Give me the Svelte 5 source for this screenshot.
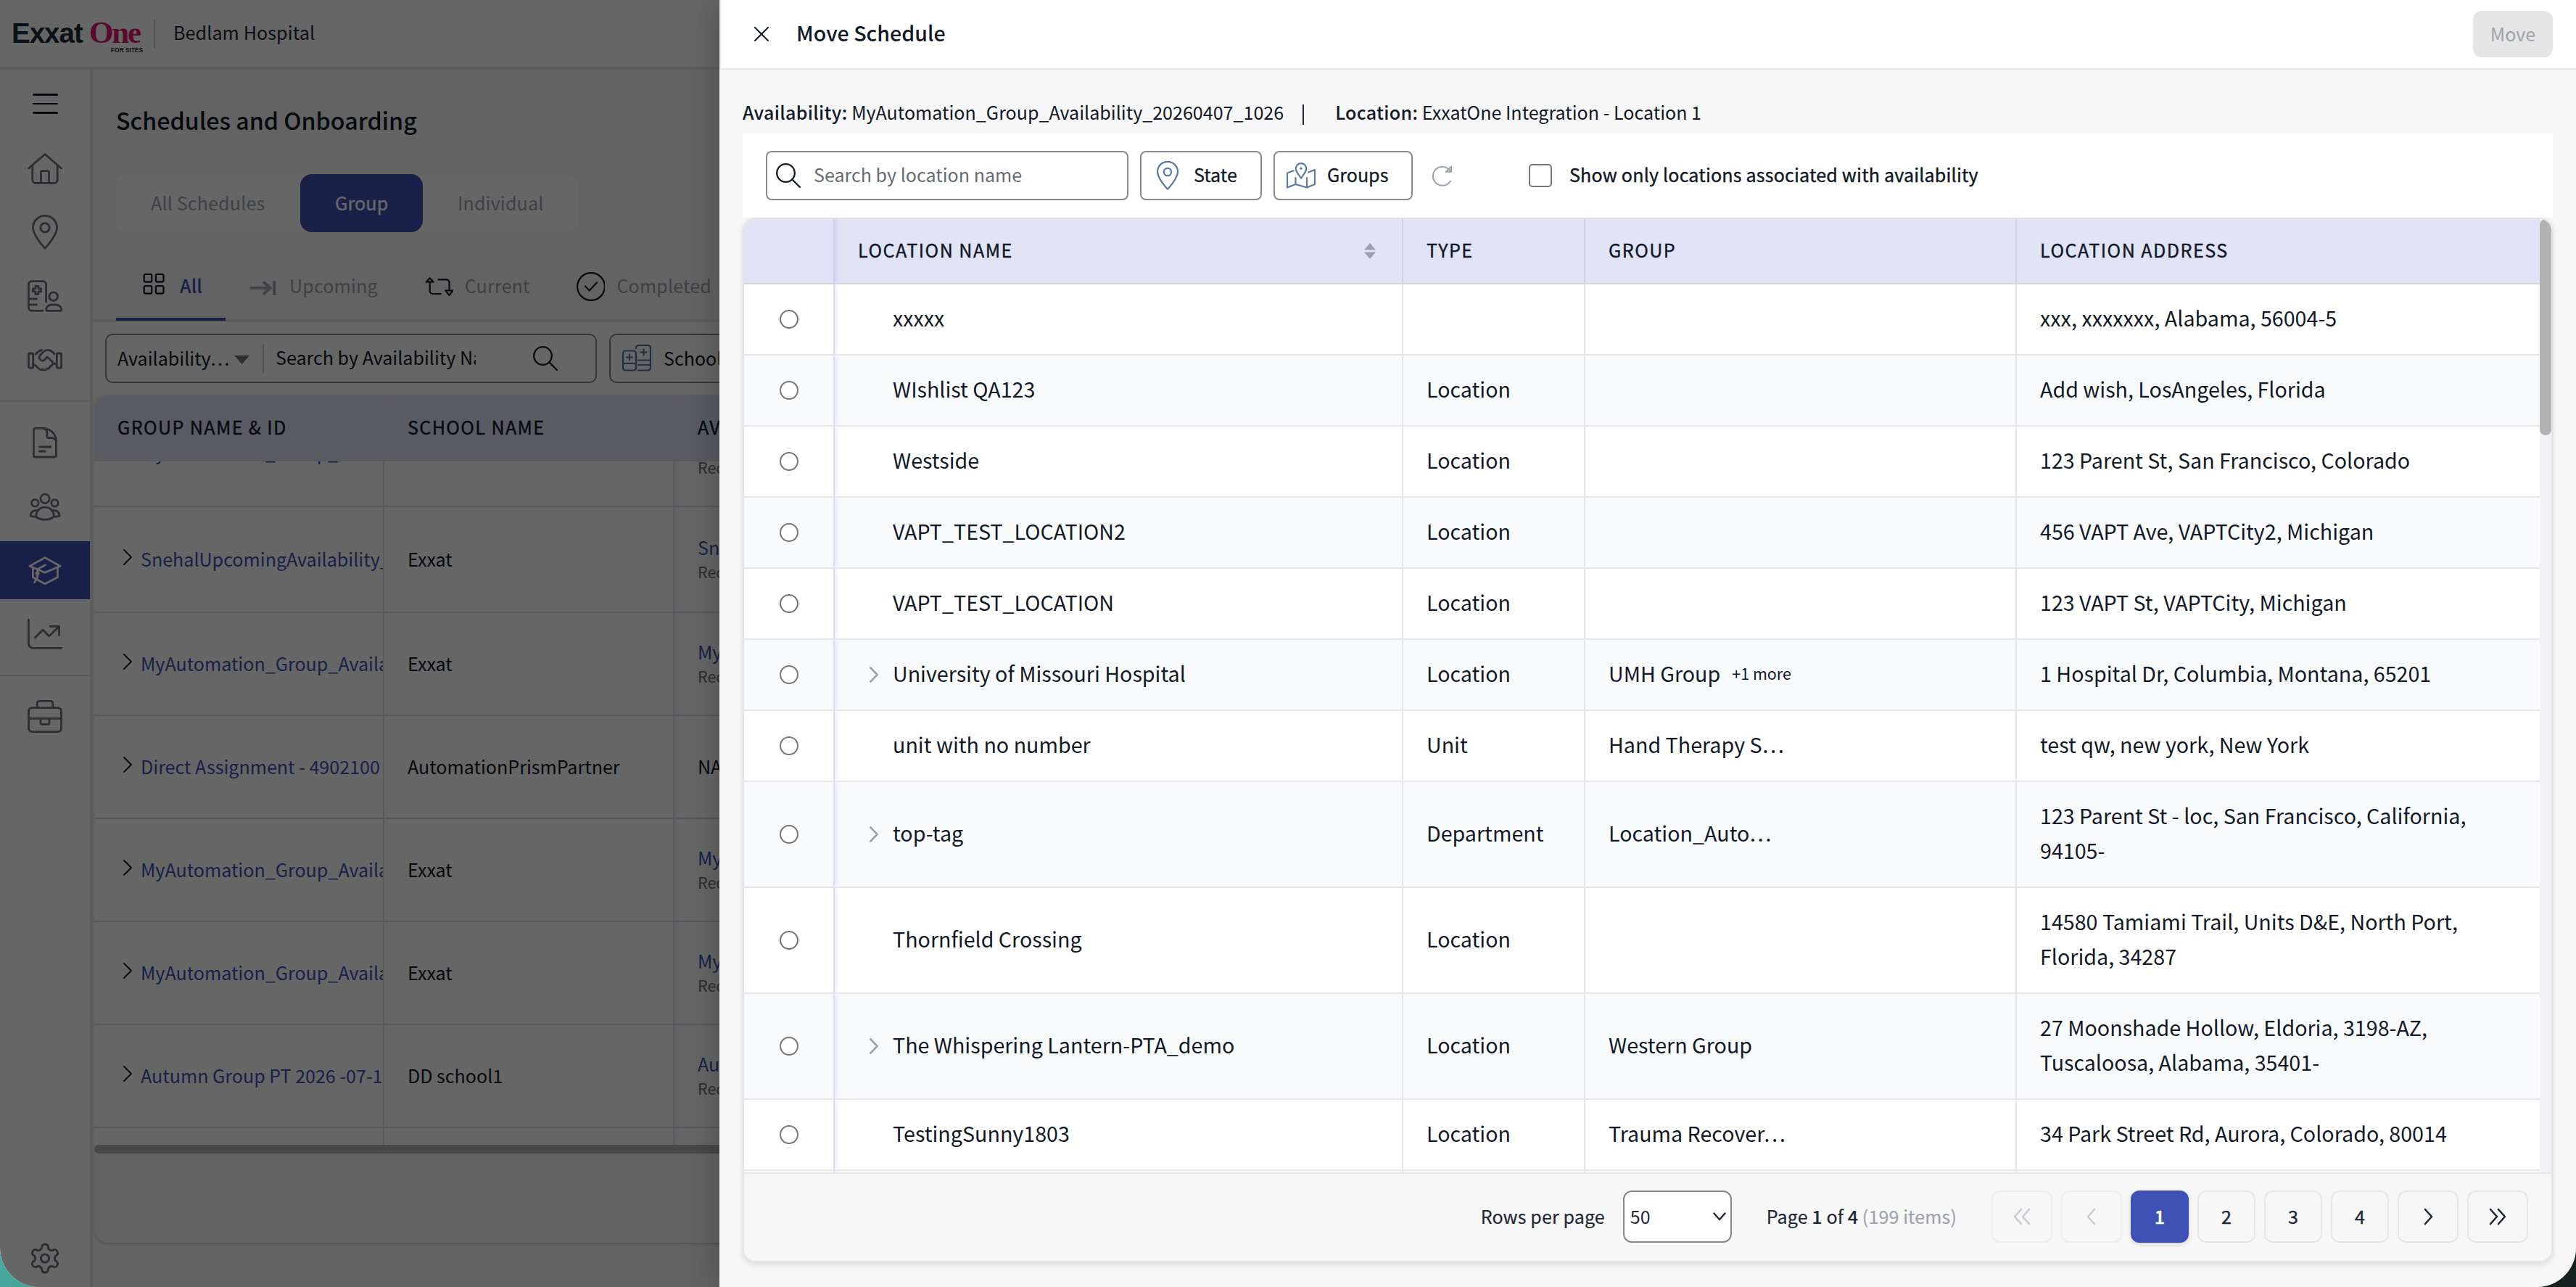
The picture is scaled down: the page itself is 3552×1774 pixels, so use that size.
<script>
  const navGroups = [
    ['home', 'pin', 'facility', 'handshake'],
    ['file', 'people', 'graduation', 'chart'],
    ['briefcase']
  ];
  const activeNav = 'graduation';

  const statusTabs = [
    { label: 'All', icon: 'grid', active: true },
    { label: 'Upcoming', icon: 'upcoming' },
    { label: 'Current', icon: 'current' },
    { label: 'Completed', icon: 'check' }
  ];

  const schedules = [
    { name: 'MyAutomation_Group_Availability', school: 'Exxat', availability: 'MyAutomation', sub: 'Requested' },
    { name: 'SnehalUpcomingAvailability_01', school: 'Exxat', availability: 'SnehalUpcoming', sub: 'Requested', tall: true },
    { name: 'MyAutomation_Group_Availability', school: 'Exxat', availability: 'MyAutomation', sub: 'Requested' },
    { name: 'Direct Assignment - 4902100', school: 'AutomationPrismPartner', availability: 'NA' },
    { name: 'MyAutomation_Group_Availability', school: 'Exxat', availability: 'MyAutomation', sub: 'Requested' },
    { name: 'MyAutomation_Group_Availability', school: 'Exxat', availability: 'MyAutomation', sub: 'Requested' },
    { name: 'Autumn Group PT 2026 -07-14', school: 'DD school1', availability: 'Autumn Group', sub: 'Requested' },
    { name: '', school: '', availability: '' }
  ];

  const locations = [
    { name: 'xxxxx', type: '', group: '', address: 'xxx, xxxxxxx, Alabama, 56004-5' },
    { name: 'WIshlist QA123', type: 'Location', group: '', address: 'Add wish, LosAngeles, Florida' },
    { name: 'Westside', type: 'Location', group: '', address: '123 Parent St, San Francisco, Colorado' },
    { name: 'VAPT_TEST_LOCATION2', type: 'Location', group: '', address: '456 VAPT Ave, VAPTCity2, Michigan' },
    { name: 'VAPT_TEST_LOCATION', type: 'Location', group: '', address: '123 VAPT St, VAPTCity, Michigan' },
    { name: 'University of Missouri Hospital', type: 'Location', group: 'UMH Group', more: '+1 more', address: '1 Hospital Dr, Columbia, Montana, 65201', expandable: true },
    { name: 'unit with no number', type: 'Unit', group: 'Hand Therapy S…', address: 'test qw, new york, New York' },
    { name: 'top-tag', type: 'Department', group: 'Location_Auto…', address: '123 Parent St - loc, San Francisco, California,\n94105-', expandable: true },
    { name: 'Thornfield Crossing', type: 'Location', group: '', address: '14580 Tamiami Trail, Units D&E, North Port,\nFlorida, 34287' },
    { name: 'The Whispering Lantern-PTA_demo', type: 'Location', group: 'Western Group', address: '27 Moonshade Hollow, Eldoria, 3198-AZ,\nTuscaloosa, Alabama, 35401-', expandable: true },
    { name: 'TestingSunny1803', type: 'Location', group: 'Trauma Recover…', address: '34 Park Street Rd, Aurora, Colorado, 80014' }
  ];

  const pages = [1, 2, 3, 4];
  let currentPage = $state(1);
</script>

{#snippet navIcon(name)}
  <svg class="nav-icon" viewBox="0 0 48 48">
    {#if name === 'home'}
      <path d="M1.5 24 24 4.5 46.5 24M6.8 20v20a4.3 4.3 0 0 0 4.3 4.3h25.8a4.3 4.3 0 0 0 4.3-4.3V20M18.5 44V29a1.3 1.3 0 0 1 1.3-1.3h8.4a1.3 1.3 0 0 1 1.3 1.3v15" />
    {:else if name === 'pin'}
      <path d="M24 46.3C20 42 7.4 27 7.4 18a16.6 16.6 0 0 1 33.2 0C40.6 27 28 42 24 46.3Z" />
      <circle cx="24" cy="17.8" r="6.2" />
    {:else if name === 'facility'}
      <path d="M25.6 32V8a4.3 4.3 0 0 0-4.3-4.3H5.7A4.3 4.3 0 0 0 1.4 8v32a4.3 4.3 0 0 0 4.3 4.3H21M2 28h10.4M2 36h10.4" />
      <path d="M11 10.3h4v3.6h3.6v4H15v3.6h-4v-3.6H7.4v-4H11Z" />
      <circle cx="35.7" cy="24.7" r="5.8" />
      <path d="M25.7 42.5a8 6.5 0 0 1 8-6.5h4.9a8 6.5 0 0 1 8 6.5q0 1.8-1.6 1.8H27.3q-1.6 0-1.6-1.8Z" />
    {:else if name === 'handshake'}
      <rect x="1.4" y="15" width="6.3" height="20.2" rx="1.4" />
      <rect x="40.3" y="15" width="6.3" height="20.2" rx="1.4" />
      <path d="M11.2 16q3.4-4.2 8.2-5.6M37 16c-4.6-6-10.4-7.2-15-3.2l-4.8 5c-2.5 2.6-.4 6.8 2.8 7.4 1.8.3 3-.6 4-1.7l3-3.6 7.2 6.7c1.6 1.7.7 5.6-2.7 5.7-.5 3-2.5 4-4.7 3.8-1.7 2.3-4 2.2-5.6 1-2.4 1-3.8.8-5.5-.8l-4.4-4.3q-1.4-1.3-3.3-1.3M34.5 29.5H40" />
    {:else if name === 'file'}
      <path d="M8.4 6.7a2.5 2.5 0 0 1 2.5-2.4H21c10.5 0 18.4 8 18.4 17.7v19.5a2.5 2.5 0 0 1-2.5 2.5h-26a2.5 2.5 0 0 1-2.5-2.5Z" />
      <path d="M21.5 4.5c3.7.4 5.3 2.6 5.3 6v5a2 2 0 0 0 2 2h4c4 0 6 2 6.4 5M16.5 30h15.3M16.5 36h7.5" />
    {:else if name === 'people'}
      <circle cx="24" cy="13.4" r="6.2" />
      <circle cx="10.3" cy="19.4" r="4.7" />
      <circle cx="37.5" cy="19.4" r="4.7" />
      <path d="M11.7 38c0-8.2 5.6-12.8 12.3-12.8S36.3 29.8 36.3 38c-2.5 3-7.3 4.2-12.3 4.2S14.2 41 11.7 38Z" />
      <path d="M14.8 30C8.5 28.3 4.1 31.5 4 37q3.5 1.6 7.4 1.2M33.2 30c6.3-1.7 10.7 1.5 10.8 7q-3.5 1.6-7.4 1.2" />
    {:else if name === 'graduation'}
      <path d="M3 18.3 24 6.6l21 11.7-21 9ZM7.4 21.5v12.3l16.6 9 17.4-9V21.5M24.7 16.7 13.6 22.5v10.8l-4 7.5" />
      <circle cx="13.6" cy="28.3" r="1.6" />
    {:else if name === 'chart'}
      <path d="M1.4 4.3v32.8a6.3 6.3 0 0 0 6.3 6.3h38.9M10.3 29 21 18l8.7 8.7L43.5 13.4M31 13.4h12.6v12.3" />
    {:else if name === 'briefcase'}
      <path d="M13.2 11V5.4a3 3 0 0 1 3-3h15.6a3 3 0 0 1 3 3V11M1.5 26.3h45M18 27v6.2a1.2 1.2 0 0 0 1.2 1.2h9.6a1.2 1.2 0 0 0 1.2-1.2V27" />
      <rect x="1.5" y="11.7" width="45" height="33" rx="4.6" />
    {:else if name === 'gear'}
      <g transform="translate(0.6 1.1) scale(1.95)" stroke-width="1.5">
        <path d="M12.22 2h-.44a2 2 0 0 0-2 2v.18a2 2 0 0 1-1 1.73l-.43.25a2 2 0 0 1-2 0l-.15-.08a2 2 0 0 0-2.73.73l-.22.38a2 2 0 0 0 .73 2.73l.15.1a2 2 0 0 1 1 1.72v.51a2 2 0 0 1-1 1.74l-.15.09a2 2 0 0 0-.73 2.73l.22.38a2 2 0 0 0 2.73.73l.15-.08a2 2 0 0 1 2 0l.43.25a2 2 0 0 1 1 1.73V20a2 2 0 0 0 2 2h.44a2 2 0 0 0 2-2v-.18a2 2 0 0 1 1-1.73l.43-.25a2 2 0 0 1 2 0l.15.08a2 2 0 0 0 2.73-.73l.22-.39a2 2 0 0 0-.73-2.73l-.15-.08a2 2 0 0 1-1-1.74v-.5a2 2 0 0 1 1-1.74l.15-.09a2 2 0 0 0 .73-2.73l-.22-.38a2 2 0 0 0-2.73-.73l-.15.08a2 2 0 0 1-2 0l-.43-.25a2 2 0 0 1-1-1.73V4a2 2 0 0 0-2-2z" />
        <circle cx="12" cy="12" r="2.9" />
      </g>
    {/if}
  </svg>
{/snippet}

{#snippet tabIcon(name)}
  <svg class="tab-icon" viewBox="0 0 40 40">
    {#if name === 'grid'}
      <rect x="6.7" y="3" width="10.6" height="10.6" rx="2" />
      <rect x="22.9" y="3" width="10.6" height="10.6" rx="2" />
      <rect x="6.7" y="19" width="10.6" height="10.6" rx="2" />
      <rect x="22.9" y="19" width="10.6" height="10.6" rx="2" />
    {:else if name === 'upcoming'}
      <path class="heavy" d="M1.7 22H29.5M20 13.5l9.5 8.5-9.5 8.5M35.2 12v20" />
    {:else if name === 'current'}
      <path d="M7.7 8.2 2.8 13.7h9.8ZM7.7 14v12a4 4 0 0 0 4 4h11M19.5 10.3h11a4 4 0 0 1 4 4v11M29.3 25.5h10L34.5 32Z" />
    {:else if name === 'check'}
      <circle cx="21" cy="20" r="18.9" />
      <path d="m13 19.5 5.6 6L29 14.6" />
    {/if}
  </svg>
{/snippet}

{#snippet searchIcon()}
  <svg class="search-icon" viewBox="0 0 34 34">
    <circle cx="13.5" cy="13.5" r="12.3" />
    <path d="M22.3 22.3 33 33" />
  </svg>
{/snippet}

<div class="desktop">
  <div class="window">
    <header class="app-header">
      <div class="logo">
        <div class="wordmark"><span class="exxat">Exxat</span><span class="one">One</span></div>
        <span class="for-sites">FOR SITES</span>
      </div>
      <div class="header-divider"></div>
      <span class="site-name">Bedlam Hospital</span>
    </header>

    <div class="app-body">
      <nav class="sidebar">
        <div class="menu-toggle">
          <span></span><span></span><span></span>
        </div>
        {#each navGroups as group}
          <div class="nav-group">
            {#each group as name}
              <div class="nav-item" class:active={name === activeNav}>{@render navIcon(name)}</div>
            {/each}
          </div>
        {/each}
        <div class="nav-item settings">{@render navIcon('gear')}</div>
      </nav>

      <main class="content">
        <h1>Schedules and Onboarding</h1>
        <div class="pills">
          <span class="pill">All Schedules</span>
          <span class="pill selected">Group</span>
          <span class="pill">Individual</span>
        </div>
        <div class="tabs">
          {#each statusTabs as tab}
            <div class="tab" class:active={tab.active}>
              {@render tabIcon(tab.icon)}
              <span>{tab.label}</span>
            </div>
          {/each}
        </div>

        <div class="filters">
          <div class="combo">
            <span class="combo-field">Availability…</span>
            <span class="caret"></span>
            <span class="combo-input">Search by Availability Name</span>
            {@render searchIcon()}
          </div>
          <div class="school-filter">
            <svg class="school-icon" viewBox="0 0 40 38">
              <rect x="1" y="8.5" width="18" height="27" rx="3.5" />
              <path d="M1 26h18M10 13.5v8M6 17.5h8M19 5V4.5A3.5 3.5 0 0 1 22.5 1h13A3.5 3.5 0 0 1 39 4.5V32a3.5 3.5 0 0 1-3.5 3.5H22M22 21.5h17M22 28h17M29.5 6.5v8M25.5 10.5h8" />
            </svg>
            <span>School</span>
          </div>
        </div>

        <div class="schedule-card">
          <div class="schedule-row schedule-head">
            <div>GROUP NAME &amp; ID</div>
            <div>SCHOOL NAME</div>
            <div>AVAILABILITY</div>
          </div>
          <div class="schedule-rows">
            {#each schedules as row}
              <div class="schedule-row" class:tall={row.tall}>
                <div class="group-name">
                  <svg class="row-chevron" viewBox="0 0 12 22"><path d="m1 1 10 10L1 21" /></svg>
                  <span class="link">{row.name}</span>
                </div>
                <div>{row.school}</div>
                <div class="availability">
                  {#if row.sub}
                    <span class="link">{row.availability}</span>
                    <span class="sub">{row.sub}</span>
                  {:else}
                    <span>{row.availability}</span>
                  {/if}
                </div>
              </div>
            {/each}
          </div>
          <div class="h-scrollbar"></div>
        </div>
      </main>
    </div>

    <div class="scrim"></div>

    <section class="drawer">
      <header class="drawer-header">
        <svg class="close" viewBox="0 0 20 20"><path d="m1 1 18 18M19 1 1 19" /></svg>
        <h2>Move Schedule</h2>
        <button class="move" disabled>Move</button>
      </header>

      <div class="drawer-body">
        <div class="summary">
          <span><b>Availability:</b> MyAutomation_Group_Availability_20260407_1026</span>
          <i class="bar"></i>
          <span><b>Location:</b> ExxatOne Integration - Location 1</span>
        </div>

        <div class="toolbar">
          <div class="search">
            {@render searchIcon()}
            <span>Search by location name</span>
          </div>
          <div class="filter">
            <svg class="state-icon" viewBox="0 0 30 40">
              <path d="M15 38.8C11.5 35 1 22.5 1 14.8a14 14 0 0 1 28 0C29 22.5 18.5 35 15 38.8Z" />
              <circle cx="15" cy="15" r="5.2" />
            </svg>
            <span>State</span>
          </div>
          <div class="filter groups">
            <svg class="map-icon" viewBox="0 0 40 36">
              <path d="M9.5 11.3 1 14.5V34.5l11.5-4.5 15.5 4.5 11-4.5V10l-8.5 3.3M12.5 21v9M28 21v13.5" />
              <path d="M20 21.5c-2.5-3.5-7.2-8.5-7.2-13.2a7.2 7.2 0 0 1 14.4 0c0 4.7-4.7 9.7-7.2 13.2Z" />
              <circle class="dot" cx="20" cy="8.2" r="1.6" />
            </svg>
            <span>Groups</span>
          </div>
          <svg class="refresh" viewBox="0 0 28 30">
            <path d="M26 22.5A13 13 0 1 1 22.5 5.2L26.8 9.5M27.2 2.5v7.3h-7.4Z" />
          </svg>
          <label class="only">
            <span class="checkbox"></span>
            Show only locations associated with availability
          </label>
        </div>

        <div class="table-card">
          <div class="table-main">
            <div class="table">
              <div class="row head">
                <div class="cell pick"></div>
                <div class="cell name">
                  <span>LOCATION NAME</span>
                  <svg class="sort" viewBox="0 0 18 24"><path d="M9 1 17 10.5H1ZM9 23 1 13.5h16Z" /></svg>
                </div>
                <div class="cell">TYPE</div>
                <div class="cell">GROUP</div>
                <div class="cell address">LOCATION ADDRESS</div>
              </div>
              {#each locations as loc}
                <div class="row">
                  <div class="cell pick"><span class="radio"></span></div>
                  <div class="cell name">
                    <span class="expander">
                      {#if loc.expandable}
                        <svg viewBox="0 0 12 22"><path d="m1.5 1.5 9 9.5-9 9.5" /></svg>
                      {/if}
                    </span>
                    <span>{loc.name}</span>
                  </div>
                  <div class="cell">{loc.type}</div>
                  <div class="cell">
                    {loc.group}
                    {#if loc.more}<span class="more">{loc.more}</span>{/if}
                  </div>
                  <div class="cell address">{loc.address}</div>
                </div>
              {/each}
              <div class="row">
                <div class="cell pick"></div>
                <div class="cell"></div>
                <div class="cell"></div>
                <div class="cell"></div>
                <div class="cell address"></div>
              </div>
            </div>
            <div class="v-scrollbar"><div class="thumb"></div></div>
          </div>

          <footer class="pagination">
            <span class="rows-label">Rows per page</span>
            <div class="select">
              <span>50</span>
              <svg viewBox="0 0 18 12"><path d="m1.5 1.5 7.5 8.5 7.5-8.5" /></svg>
            </div>
            <span class="page-info">Page <b>1</b> of <b>4</b> <em>(199 items)</em></span>
            <div class="pager">
              <button class="arrow" disabled><svg viewBox="0 0 24 24"><path d="M11 2 2 12l9 10M22 2l-9 10 9 10" /></svg></button>
              <button class="arrow" disabled><svg viewBox="0 0 24 24"><path d="m16 2-9 10 9 10" /></svg></button>
              {#each pages as page}
                <button class:current={page === currentPage} onclick={() => (currentPage = page)}>{page}</button>
              {/each}
              <button class="arrow"><svg viewBox="0 0 24 24"><path d="m8 2 9 10-9 10" /></svg></button>
              <button class="arrow"><svg viewBox="0 0 24 24"><path d="m2 2 9 10-9 10M13 2l9 10-9 10" /></svg></button>
            </div>
          </footer>
        </div>
      </div>
    </section>
  </div>
</div>

<style>
  :global(body) {
    margin: 0;
  }

  .desktop {
    width: 3552px;
    height: 1774px;
    background: linear-gradient(90deg, #48a89b 0, #3f9d98 60px, #16201f 61px, #16201f 100%);
    font-family: 'Noto Sans CJK SC', 'Noto Sans', sans-serif;
    font-size: 25.07px;
    line-height: 36px;
    color: #111827;
    white-space: nowrap;
  }

  .desktop * {
    box-sizing: border-box;
  }

  svg {
    display: block;
    flex: none;
    fill: none;
    stroke: currentColor;
    stroke-linecap: round;
    stroke-linejoin: round;
  }

  .window {
    position: relative;
    display: flex;
    flex-direction: column;
    width: 3552px;
    height: 1774px;
    overflow: hidden;
    border-radius: 0 0 54px 54px;
    background: #f7f7f7;
  }

  /* App shell */
  .app-header {
    display: flex;
    flex: none;
    height: 96px;
    background: #fff;
    border-bottom: 4px solid #e5e7eb;
  }

  .logo {
    display: flex;
    flex-direction: column;
    width: 197px;
    padding: 25px 0 0 16px;
  }

  .wordmark {
    display: flex;
    align-items: baseline;
    height: 40px;
    line-height: 40px;
  }

  .exxat {
    width: 107px;
    font: bold 38.5px/40px 'Liberation Sans', sans-serif;
    letter-spacing: -1px;
    color: #1d2b38;
  }

  .one {
    font: bold 43px/40px 'Liberation Serif', serif;
    letter-spacing: -2.2px;
    color: #e0156c;
  }

  .for-sites {
    align-self: flex-end;
    font: bold 8.4px/8px 'Liberation Sans', sans-serif;
    color: #1d2b38;
  }

  .header-divider {
    width: 2px;
    height: 40px;
    margin: 26px 25px 0 15px;
    background: #d1d5db;
  }

  .site-name {
    padding-top: 26px;
    letter-spacing: 0.1px;
    color: #1f2937;
  }

  .app-body {
    display: flex;
    flex: 1;
  }

  .sidebar {
    display: flex;
    flex: none;
    flex-direction: column;
    width: 128px;
    background: #fff;
    border-right: 4px solid #e5e7eb;
  }

  .menu-toggle {
    display: flex;
    flex-direction: column;
    gap: 10px;
    align-items: center;
    height: 80px;
    padding-top: 33px;
  }

  .menu-toggle span {
    width: 35px;
    height: 2.6px;
    border-radius: 2px;
    background: #0a1020;
  }

  .nav-group {
    display: flex;
    flex-direction: column;
    gap: 8px;
    padding: 16px 0;
  }

  .nav-group + .nav-group {
    border-top: 2px solid #e5e7eb;
  }

  .nav-item {
    display: flex;
    align-items: center;
    justify-content: center;
    height: 80px;
    color: #6b7280;
  }

  .nav-item.active {
    background: #3f51b5;
    color: #fff;
  }

  .nav-item.settings {
    margin-top: auto;
  }

  .nav-icon {
    width: 48px;
    height: 48px;
    stroke-width: 2.8;
  }

  .content {
    display: flex;
    flex: none;
    flex-direction: column;
    width: 3424px;
  }

  h1 {
    margin: 45px 0 51px 32px;
    font-size: 32.2px;
    font-weight: 500;
    line-height: 48px;
  }

  .pills {
    display: grid;
    grid-template-columns: 254px 169px 215px;
    width: 638px;
    height: 80px;
    margin-left: 32px;
    border-radius: 16px;
    background: #fff;
  }

  .pill {
    padding: 21px 0 0 48px;
    letter-spacing: 0.15px;
    color: #9ca3af;
  }

  .pill.selected {
    border-radius: 16px;
    background: #3f51b5;
    color: #fff;
    -webkit-text-stroke: 0.4px;
  }

  .tabs {
    display: flex;
    height: 124px;
    padding-left: 32px;
    border-bottom: 4px solid #e5e7eb;
  }

  .tab {
    display: flex;
    gap: 16px;
    padding: 55px 32px 0;
    letter-spacing: 0.15px;
    color: #9ca3af;
  }

  .tab.active {
    margin-bottom: -2px;
    border-bottom: 4px solid #3f51b5;
    color: #3f51b5;
    font-weight: 500;
  }

  .tab-icon {
    width: 40px;
    height: 40px;
    color: #111827;
    stroke-width: 2.2;
  }

  .tab-icon .heavy {
    stroke: #9ca3af;
    stroke-width: 4;
    stroke-linecap: butt;
    stroke-linejoin: miter;
  }

  .filters {
    display: flex;
    gap: 17px;
    height: 100px;
    padding: 16px 0 16px 17px;
    background: #fff;
  }

  .combo {
    display: flex;
    align-items: center;
    width: 678px;
    border: 2px solid #888;
    border-radius: 10px;
    padding: 0 15px;
  }

  .combo-field {
    width: 161px;
    padding-bottom: 3px;
  }

  .caret {
    width: 21px;
    height: 12px;
    margin-top: 4px;
    background: #6b7280;
    clip-path: polygon(0 0, 100% 0, 50% 100%);
  }

  .combo-input {
    width: 294px;
    height: 40px;
    margin: 0 79px 0 18px;
    padding-left: 16px;
    overflow: hidden;
    border-left: 2px solid #d1d5db;
    line-height: 37px;
  }

  .search-icon {
    width: 34px;
    height: 34px;
    stroke-width: 2.3;
  }

  .school-filter {
    display: flex;
    align-items: center;
    gap: 17px;
    width: 240px;
    padding: 0 16px;
    border: 2px solid #888;
    border-radius: 10px;
  }

  .school-filter span {
    padding-bottom: 3px;
  }

  .school-icon {
    width: 40px;
    height: 38px;
    color: #587399;
    stroke-width: 2.2;
  }

  .schedule-card {
    display: flex;
    flex-direction: column;
    height: 1169px;
    margin-left: 2px;
    overflow: hidden;
    border-radius: 20px;
    border-top: 2px solid #e5e7eb;
    background: #f7f7f7;
    box-shadow: 0 2px 4px rgba(0, 0, 0, 0.14);
  }

  .schedule-row {
    display: grid;
    flex: none;
    grid-template-columns: 400px 400px 1fr;
    height: 142px;
    background: #fff;
    border-bottom: 2px solid #dddfe5;
  }

  .schedule-row.tall {
    height: 146px;
  }

  .schedule-row > div {
    display: flex;
    align-items: center;
    padding: 0 0 2px 32px;
    overflow: hidden;
    border-right: 2px solid #e0e2e8;
  }

  .schedule-row > .availability {
    flex-direction: column;
    align-items: flex-start;
    justify-content: center;
    box-shadow: inset 5px 0 6px -4px rgba(79, 70, 229, 0.2);
  }

  .schedule-head {
    height: 90px;
    background: #e1e4f5;
    letter-spacing: 1.4px;
    -webkit-text-stroke: 0.4px;
  }

  .schedule-row.schedule-head > div {
    padding-bottom: 4px;
  }

  .schedule-rows {
    display: flex;
    flex: none;
    flex-direction: column;
    height: 942px;
    overflow: hidden;
  }

  .schedule-rows .schedule-row:first-child {
    margin-top: -79px;
  }

  .schedule-rows .schedule-row:first-child > div:not(.availability) {
    padding-bottom: 8px;
  }

  .schedule-row > .group-name {
    padding-left: 40px;
  }

  .row-chevron {
    width: 12px;
    height: 22px;
    margin: 0 12px 5px 0;
    color: #111827;
    stroke-width: 1.8;
  }

  .link {
    color: #3f51b5;
  }

  .sub {
    font-size: 21.5px;
    line-height: 32px;
    color: #6b7280;
  }

  .h-scrollbar {
    height: 12px;
    border-radius: 6px;
    background: #b3b3b3;
  }

  .scrim {
    position: absolute;
    inset: 0;
    background: rgba(0, 0, 0, 0.6);
  }

  /* Drawer */
  .drawer {
    position: absolute;
    top: 0;
    right: 0;
    bottom: 0;
    display: flex;
    flex-direction: column;
    width: 2560px;
    background: #f7f7f7;
    box-shadow: -8px 0 40px rgba(0, 0, 0, 0.18);
  }

  .drawer-header {
    display: flex;
    align-items: center;
    height: 96px;
    padding: 0 32px 0 46px;
    background: #fff;
    border-left: 2px solid #e5e7eb;
    border-bottom: 2px solid #e5e7eb;
  }

  .close {
    width: 20px;
    height: 20px;
    stroke-width: 2;
  }

  h2 {
    flex: 1;
    margin: 0 0 0 38px;
    padding-bottom: 4px;
    font-size: 28.6px;
    font-weight: 500;
    line-height: 40px;
  }

  .move {
    width: 110px;
    height: 64px;
    padding: 0 0 3px;
    border: 0;
    border-radius: 12px;
    background: #e5e5e5;
    color: #9ca3af;
    font: inherit;
  }

  .drawer-body {
    display: flex;
    flex-direction: column;
    padding: 0 32px;
  }

  .summary {
    display: flex;
    align-items: center;
    height: 88px;
    padding-top: 28px;
  }

  .summary b {
    font-weight: 500;
    letter-spacing: 0.3px;
  }

  .bar {
    width: 2px;
    height: 28px;
    margin: 7px 43px 0 26px;
    background: #1f2937;
  }

  .toolbar {
    display: flex;
    align-items: center;
    height: 116px;
    padding: 0 32px;
    background: #fff;
  }

  .toolbar span {
    padding-bottom: 4px;
  }

  .search,
  .filter {
    display: flex;
    align-items: center;
    height: 68px;
    border: 2px solid #8a8a92;
    border-radius: 8px;
  }

  .search {
    width: 500px;
    padding-left: 12px;
    border-color: #888;
  }

  .search span {
    margin-left: 18px;
    color: #656b75;
  }

  .filter {
    width: 168px;
    margin-left: 16px;
    padding-left: 21px;
  }

  .filter.groups {
    width: 192px;
    padding-left: 16px;
  }

  .filter span {
    margin-left: 21px;
    -webkit-text-stroke: 0.3px;
  }

  .filter.groups span {
    margin-left: 16px;
  }

  .state-icon,
  .map-icon {
    width: 30px;
    height: 40px;
    color: #5b78a3;
    stroke-width: 2.2;
  }

  .map-icon {
    width: 40px;
    height: 36px;
  }

  .dot {
    fill: currentColor;
    stroke: none;
  }

  .refresh {
    width: 28px;
    height: 30px;
    margin-left: 26px;
    color: #9ca3af;
    stroke-width: 2;
  }

  .only {
    display: flex;
    align-items: center;
    margin-left: 106px;
    padding-bottom: 4px;
    letter-spacing: 0.18px;
    -webkit-text-stroke: 0.4px;
  }

  .only .checkbox {
    width: 32px;
    height: 32px;
    margin: 4px 24px 0 0;
    border: 2px solid #767676;
    border-radius: 5px;
  }

  .table-card {
    display: flex;
    flex-direction: column;
    height: 1440px;
    overflow: hidden;
    border: 2px solid #e2e4ea;
    border-radius: 18px;
    box-shadow: 0 3px 8px rgba(0, 0, 0, 0.12);
  }

  .table-main {
    display: flex;
    height: 1314px;
  }

  .table {
    width: 2476px;
    overflow: hidden;
    font-size: 28.65px;
    line-height: 48px;
  }

  .row {
    display: grid;
    grid-template-columns: 125px 784px 251px 595px 721px;
    min-height: 98px;
    background: #fff;
    border-bottom: 2px solid #e5e7eb;
  }

  .row:nth-child(odd) {
    background: #f9fafc;
  }

  .row.head {
    min-height: 90px;
    background: #e1e4f5;
    border-color: #d1d5db;
    font-size: 25.07px;
    letter-spacing: 1.5px;
    -webkit-text-stroke: 0.4px;
  }

  .cell {
    display: flex;
    align-items: center;
    padding: 22px 0 26px 32px;
    border-right: 2px solid #e5e7eb;
  }

  .head .cell {
    padding-top: 0;
    padding-bottom: 4px;
    border-color: #d1d5db;
  }

  .cell.address {
    border-right: 0;
    white-space: pre;
  }

  .cell.pick {
    justify-content: center;
    padding: 0;
    border-color: #dfdfec;
    box-shadow: 2px 0 6px rgba(79, 70, 229, 0.13);
    clip-path: inset(0 -10px 0 0);
  }

  .head .cell.pick {
    border-color: #cdcfe4;
  }

  .radio {
    width: 26px;
    height: 26px;
    border: 2px solid #767676;
    border-radius: 50%;
    background: #fff;
  }

  .sort {
    width: 18px;
    height: 24px;
    margin: 4px 35px 0 auto;
    color: #9ca3af;
    stroke: none;
    fill: currentColor;
  }

  .expander {
    width: 48px;
    padding: 4px 0 0 16px;
    color: #9ca3af;
  }

  .expander svg {
    width: 12px;
    height: 22px;
    stroke-width: 2.6;
  }

  .more {
    margin-left: 16px;
    font-size: 21.5px;
    line-height: 32px;
  }

  .v-scrollbar {
    width: 16px;
    background: #f4f1f6;
  }

  .thumb {
    height: 298px;
    border-radius: 8px;
    background: #b3b3b3;
  }

  .pagination {
    display: flex;
    align-items: center;
    justify-content: flex-end;
    height: 122px;
    padding: 0 32px 2px 0;
    background: #f7f7f7;
    border-top: 2px solid #e5e7eb;
    color: #1f2937;
  }

  .pagination > span,
  .select span {
    padding-bottom: 2px;
  }

  .rows-label,
  .page-info {
    letter-spacing: 0.1px;
    -webkit-text-stroke: 0.2px;
  }

  .select {
    display: flex;
    align-items: center;
    justify-content: space-between;
    width: 150px;
    height: 72px;
    margin: 0 48px 0 25px;
    padding: 0 6px 0 8px;
    border: 2px solid #888;
    border-radius: 12px;
    background: #fff;
  }

  .select svg {
    width: 18px;
    height: 12px;
    stroke-width: 2.4;
  }

  .page-info b {
    font-weight: 500;
  }

  .page-info em {
    font-style: normal;
    color: #9ca3af;
  }

  .pager {
    display: flex;
    gap: 12px;
    margin-left: 48px;
  }

  .pager button {
    display: flex;
    align-items: center;
    justify-content: center;
    width: 80px;
    height: 72px;
    padding: 0 0 2px;
    border: 2px solid #e5e7eb;
    border-radius: 12px;
    background: transparent;
    color: #1f2937;
    font: inherit;
    -webkit-text-stroke: 0.4px;
  }

  .pager button.arrow {
    width: 84px;
    padding: 0;
  }

  .pager button:disabled {
    opacity: 0.5;
    color: #9ca3af;
  }

  .pager button.current {
    border-color: #3f51b5;
    background: #3f51b5;
    color: #fff;
    font-weight: 500;
    box-shadow: 0 2px 6px rgba(0, 0, 0, 0.15);
  }

  .pager svg {
    width: 24px;
    height: 24px;
    stroke-width: 2.6;
  }
</style>
